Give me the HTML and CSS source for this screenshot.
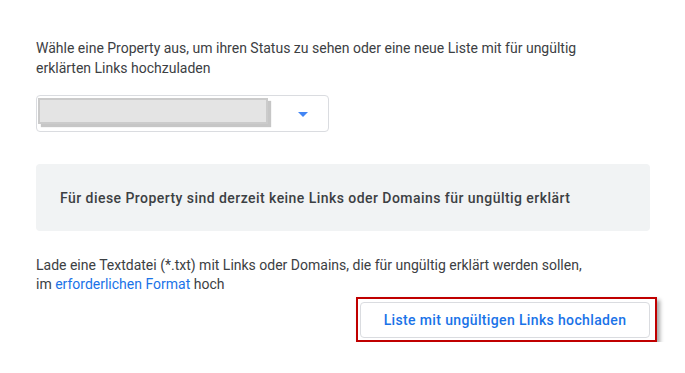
FILE: index.html
```html
<!DOCTYPE html>
<html lang="de">
<head>
  <meta charset="UTF-8">
  <title>Ungültig erklärte Links</title>
  <meta name="viewport" content="width=device-width, initial-scale=1.0">
  <link rel="stylesheet" href="styles.css">
</head>
<body>
  <div class="page">
    <p class="intro">Wähle eine Property aus, um ihren Status zu sehen oder eine neue Liste mit für ungültig erklärten Links hochzuladen</p>

    <div class="select">
      <div class="redacted"></div>
      <svg class="arrow" width="10" height="5" viewBox="0 0 10 5"><path d="M0 0h10L5 5z" fill="#4285f4"/></svg>
    </div>

    <div class="notice">Für diese Property sind derzeit keine Links oder Domains für ungültig erklärt</div>

    <p class="upload-info">Lade eine Textdatei (*.txt) mit Links oder Domains, die für ungültig erklärt werden sollen,<br>im <a href="#">erforderlichen Format</a> hoch</p>

    <div class="actions">
      <!-- roter Rahmen als Markierung -->
      <div class="highlight">
        <button class="upload-btn">Liste mit ungültigen Links hochladen</button>
      </div>
    </div>
  </div>
</body>
</html>
```

FILE: styles.css
```css
body {
  margin: 0;
  background: #fff;
  font-family: Roboto, 'Liberation Sans', Arial, sans-serif;
  color: #3c4043;
}
.page {
  width: 614px;
  padding: 38px 0 0 36px;
}
.intro {
  margin: 0;
  font-size: 14px;
  line-height: 20px;
  width: 580px;
}
.select {
  margin-top: 17px;
  width: 290px;
  height: 34px;
  border: 1px solid #dadce0;
  border-radius: 4px;
  display: flex;
  align-items: flex-start;
  justify-content: space-between;
  padding: 1px 0 0 1px;
  box-sizing: content-box;
}
.redacted {
  width: 226px;
  height: 22px;
  margin-top: 1px;
  background: #e4e4e4;
  border: 2px solid #cbcbcb;
  box-shadow: 3px 3px 1px #c6c6c6;
}
.arrow {
  margin: 15px 20px 0 0;
}
.notice {
  margin-top: 32px;
  height: 67px;
  background: #f1f3f4;
  border-radius: 4px;
  display: flex;
  align-items: center;
  padding-left: 24px;
  font-size: 14px;
  font-weight: 500;
  letter-spacing: 0.45px;
  color: #3c4043;
}
.upload-info {
  margin: 25px 0 0;
  font-size: 14px;
  line-height: 19px;
}
.upload-info a {
  color: #1a73e8;
  text-decoration: none;
}
.actions {
  display: flex;
  justify-content: flex-end;
  margin-top: 3px;
  margin-right: -7px;
}
.highlight {
  border: 2px solid #c00000;
  padding: 3px 5px 2px 2px;
  box-shadow: 3px 3px 4px rgba(0,0,0,0.35);
}
.upload-btn {
  display: block;
  width: 290px;
  height: 36px;
  background: #fff;
  border: 1px solid #dadce0;
  border-radius: 4px;
  font-family: Roboto, 'Liberation Sans', Arial, sans-serif;
  font-size: 14px;
  font-weight: 500;
  letter-spacing: 0.36px;
  color: #1a73e8;
  cursor: pointer;
}
```
